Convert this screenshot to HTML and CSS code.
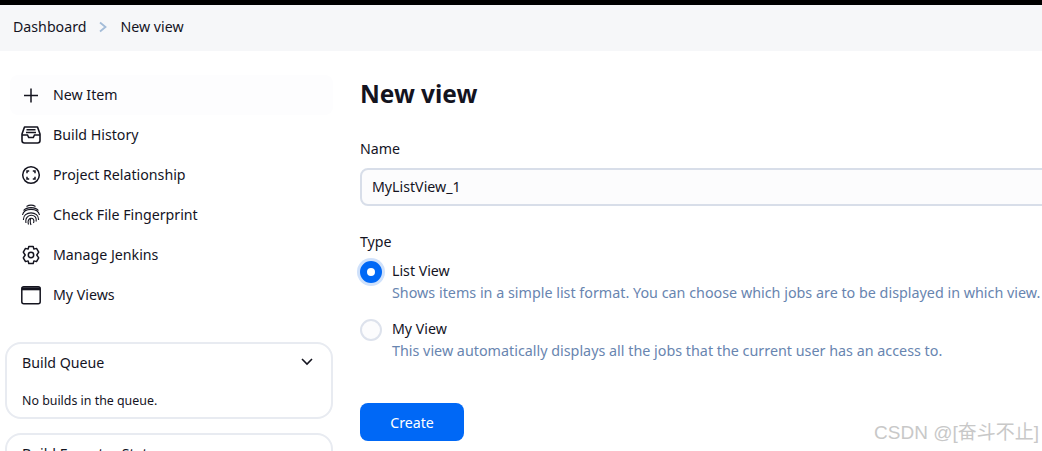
FILE: index.html
```html
<!DOCTYPE html>
<html lang="en">
<head>
    <meta charset="UTF-8">
    <meta name="viewport" content="width=device-width, initial-scale=1.0">
    <title>New view</title>
    <link rel="stylesheet" href="styles.css">
</head>
<body>
    <div class="breadcrumbs">
        <span>Dashboard</span>
        <svg class="crumb-sep" viewBox="0 0 10 12" width="10" height="12"><path d="M2 1.500 7.500 6 2 10.500" fill="none" stroke="#a3bcd8" stroke-width="1.800"/></svg>
        <span>New view</span>
    </div>
    <div class="page">
        <div class="sidebar">
            <div class="tasks">
                <div class="task task-hover">
                    <svg class="task-icon" viewBox="0 0 20 20"><path d="M10 3.500v14M3 10.500h14" fill="none" stroke="#14141f" stroke-width="1.500"/></svg>
                    <span>New Item</span>
                </div>
                <div class="task">
                    <svg class="task-icon" viewBox="0 0 20 20" fill="none" stroke="#14141f" stroke-width="1.600"><path d="M3.500 2h13l2.500 7v6.500a2.500 2.500 0 0 1-2.500 2.500h-13A2.500 2.500 0 0 1 1 15.500V9z" stroke-linejoin="round"/><path d="M1 10h5.500l1.200 2.500h4.600l1.200-2.500H19M5.500 4.800h9M5 7.500h10"/></svg>
                    <span>Build History</span>
                </div>
                <div class="task">
                    <svg class="task-icon" viewBox="0 0 20 20" fill="none" stroke="#14141f" stroke-width="1.500"><circle cx="10" cy="10" r="8.300"/><path d="M6 8.200V6h2.200M11.800 6H14v2.200M14 11.800V14h-2.200M8.200 14H6v-2.200" stroke-width="1.500"/></svg>
                    <span>Project Relationship</span>
                </div>
                <div class="task">
                    <svg class="task-icon fingerprint" viewBox="0 0 20 22" fill="none" stroke="#14141f" stroke-width="1.100"><path d="M5.500 2.500c2.800-1.700 6.200-1.700 9 0M2.500 6.500c3.500-3.800 11.500-3.800 15 0M1.500 11c1.500-7.500 15.500-7.500 17 0M2.500 16c-1-9.500 16-9.500 15 0M5 19c-2-10 12-10 10-1.500M7.500 20.500c-2.500-8 7.500-8 5-1.500M10 21c-1-2.500-1-5 0-7"/></svg>
                    <span>Check File Fingerprint</span>
                </div>
                <div class="task">
                    <svg class="task-icon" viewBox="0 0 20 20" fill="none" stroke="#14141f" stroke-width="1.500"><path d="M7.800 1.500h4.400l.7 2.600 2.600-.7 2.200 3.800-1.900 2.800 1.900 2.800-2.200 3.800-2.600-.7-.7 2.600H7.800l-.7-2.600-2.600.7-2.200-3.800L4.200 10 2.300 7.200l2.200-3.800 2.600.7z" stroke-linejoin="round"/><circle cx="10" cy="10" r="2.700"/></svg>
                    <span>Manage Jenkins</span>
                </div>
                <div class="task">
                    <svg class="task-icon" viewBox="0 0 20 20" fill="none" stroke="#14141f" stroke-width="1.500"><rect x=".8" y="1.800" width="18.400" height="17" rx="2"/><path d="M.8 3.800h18.400" stroke-width="3"/></svg>
                    <span>My Views</span>
                </div>
            </div>
            <div class="pane">
                <div class="pane-head">
                    <span>Build Queue</span>
                    <svg viewBox="0 0 14 10" width="14" height="10"><path d="M2 2l5 5 5-5" fill="none" stroke="#14141f" stroke-width="1.600"/></svg>
                </div>
                <div class="pane-body">No builds in the queue.</div>
            </div>
            <div class="pane pane-next">
                <div class="pane-head">
                    <span>Build Executor Status</span>
                </div>
            </div>
        </div>
        <div class="main">
            <h1>New view</h1>
            <label class="field-label">Name</label>
            <input class="name-input" type="text" value="MyListView_1">
            <div class="type-label">Type</div>
            <div class="radio-row">
                <span class="radio radio-on"></span>
                <div>
                    <div class="radio-title">List View</div>
                    <div class="radio-desc">Shows items in a simple list format. You can choose which jobs are to be displayed in which view.</div>
                </div>
            </div>
            <div class="radio-row">
                <span class="radio"></span>
                <div>
                    <div class="radio-title">My View</div>
                    <div class="radio-desc">This view automatically displays all the jobs that the current user has an access to.</div>
                </div>
            </div>
            <button class="create-btn">Create</button>
        </div>
    </div>
    <div class="watermark">CSDN @[奋斗不止]</div>
</body>
</html>
```

FILE: styles.css
```css
html, body {
    height: 100%;
    overflow: hidden;
}

body {
    margin: 0;
    background-color: #fff;
    color: #14141f;
    font-family: "Noto Sans", "Noto Sans CJK SC", sans-serif;
    font-size: 14.2px;
    border-top: 5px solid #000;
    box-sizing: border-box;
}

.breadcrumbs {
    display: flex;
    align-items: center;
    gap: 12px;
    height: 46px;
    box-sizing: border-box;
    padding: 0 0 3px 13px;
    background-color: #f6f7f9;
}

.page {
    display: flex;
}

.sidebar {
    flex: 0 0 340px;
    box-sizing: border-box;
    padding: 24px 7px 0 5px;
}

.tasks {
    margin-bottom: 27px;
}

.task {
    display: flex;
    align-items: center;
    gap: 12px;
    height: 40px;
    padding: 0 0 0 11px;
    margin-left: 5px;
    border-radius: 8px;
}

.task span {
    padding-bottom: 2px;
}

.task-hover {
    background-color: #fdfdfe;
}

.task-icon {
    width: 20px;
    height: 20px;
    flex: none;
}

.fingerprint {
    height: 22px;
}

.pane {
    border: 2px solid #e8ebf1;
    border-radius: 16px;
    height: 77px;
    box-sizing: border-box;
    margin-bottom: 14px;
}

.pane-head {
    display: flex;
    justify-content: space-between;
    align-items: center;
    padding: 8px 17px 0 15px;
    height: 20px;
}

.pane-body {
    padding: 20px 15px 0;
    font-size: 12.4px;
}

.main {
    flex: none;
    width: 800px;
    padding-left: 20px;
}

h1 {
    margin: 26px 0 0;
    font-size: 24.4px;
    line-height: 34px;
    font-weight: 700;
}

.field-label {
    display: block;
    margin-top: 28px;
    line-height: 20px;
}

.name-input {
    display: block;
    box-sizing: border-box;
    width: 800px;
    height: 38px;
    margin-top: 9px;
    padding: 0 10px 2px;
    border: 2px solid #d8dee9;
    border-radius: 8px;
    background-color: #fcfcfd;
    color: #14141f;
    font: inherit;
}

.type-label {
    margin-top: 26px;
    line-height: 20px;
}

.radio-row {
    display: flex;
    gap: 10px;
    height: 58px;
}

.radio {
    flex: none;
    box-sizing: border-box;
    width: 22px;
    height: 22px;
    margin-top: 9px;
    border: 2px solid #dde2ec;
    border-radius: 50%;
    background-color: #fcfcfd;
}

.radio-on {
    border: 7.500px solid #0068f6;
    background-color: #fff;
    box-shadow: 0 0 0 3px #cfe1fb;
}

.radio-title {
    line-height: 20px;
    margin-top: 9px;
}

.radio-desc {
    margin-top: 2px;
    line-height: 20px;
    font-size: 14.33px;
    color: #6885b0;
    white-space: nowrap;
}

.create-btn {
    display: block;
    width: 104px;
    height: 38px;
    margin-top: 35px;
    padding: 0;
    border: none;
    border-radius: 8px;
    background-color: #0068f6;
    color: #fff;
    font: inherit;
}

.watermark {
    position: absolute;
    right: 3px;
    top: 421px;
    color: #c8c8c8;
    font-family: "Liberation Sans", "Noto Sans CJK SC", sans-serif;
    font-size: 19px;
    line-height: 24px;
}
```
